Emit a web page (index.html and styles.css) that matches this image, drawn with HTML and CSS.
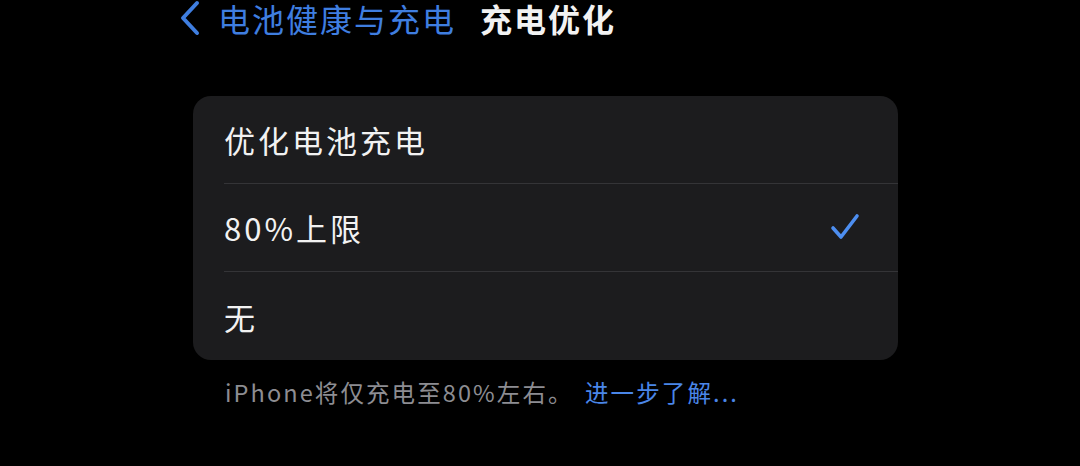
FILE: index.html
```html
<!DOCTYPE html>
<html lang="zh-CN">
<head>
<meta charset="utf-8">
<title>充电优化</title>
<link rel="stylesheet" href="styles.css">
</head>
<body>
<div class="screen">
  <header class="nav">
    <a class="back">
      <svg class="chev" width="22" height="36" viewBox="0 0 22 36"><path d="M18 3 L4 18 L18 33" fill="none" stroke="#3f7ee0" stroke-width="4" stroke-linecap="round" stroke-linejoin="round"/></svg>
      <span class="back-label">电池健康与充电</span>
    </a>
    <h1 class="title">充电优化</h1>
  </header>
  <section class="card">
    <div class="row"><span class="label">优化电池充电</span></div>
    <div class="row"><span class="label">80%上限</span>
      <svg class="check" width="30" height="28" viewBox="0 0 30 28"><path d="M3 15 L11 24 L27 3" fill="none" stroke="#4d8ef0" stroke-width="3.6" stroke-linecap="round" stroke-linejoin="round"/></svg>
    </div>
    <div class="row"><span class="label">无</span></div>
  </section>
  <p class="footer">iPhone将仅充电至80%左右。 <span class="link">进一步了解...</span></p>
</div>
</body>
</html>
```
FILE: styles.css
```css
html, body {
  margin: 0;
  padding: 0;
  background: #000;
}
body {
  width: 1080px;
  height: 466px;
  overflow: hidden;
  font-family: "Noto Sans CJK SC", "Noto Sans", sans-serif;
}
.screen {
  padding-left: 193px;
  width: 705px;
}
.nav {
  display: flex;
  align-items: center;
  height: 36px;
  margin-left: -14px;
}
.back {
  display: flex;
  align-items: center;
  gap: 17px;
  color: #3f7ee0;
}
.back-label {
  font-size: 32px;
  line-height: 36px;
  letter-spacing: 2px;
}
.title {
  margin: 0 0 0 24px;
  font-size: 32px;
  line-height: 36px;
  font-weight: 700;
  color: #f2f2f2;
  letter-spacing: 2px;
}
.card {
  margin-top: 60px;
  background: #1c1c1e;
  border-radius: 18px;
  padding-left: 31px;
  overflow: hidden;
}
.row {
  height: 88px;
  display: flex;
  align-items: center;
  justify-content: space-between;
  padding-right: 38px;
  border-bottom: 1px solid #343437;
  box-sizing: border-box;
}
.row:last-child {
  border-bottom: none;
}
.label {
  font-size: 31px;
  color: #f2f2f2;
  letter-spacing: 3px;
}
.check {
  display: block;
  margin-top: -2px;
}
.footer {
  margin: 16px 0 0 32px;
  font-size: 23.5px;
  line-height: 32px;
  color: #8d8d92;
  letter-spacing: 2.1px;
}
.link {
  color: #4a86e8;
  margin-left: 4px;
}
```
